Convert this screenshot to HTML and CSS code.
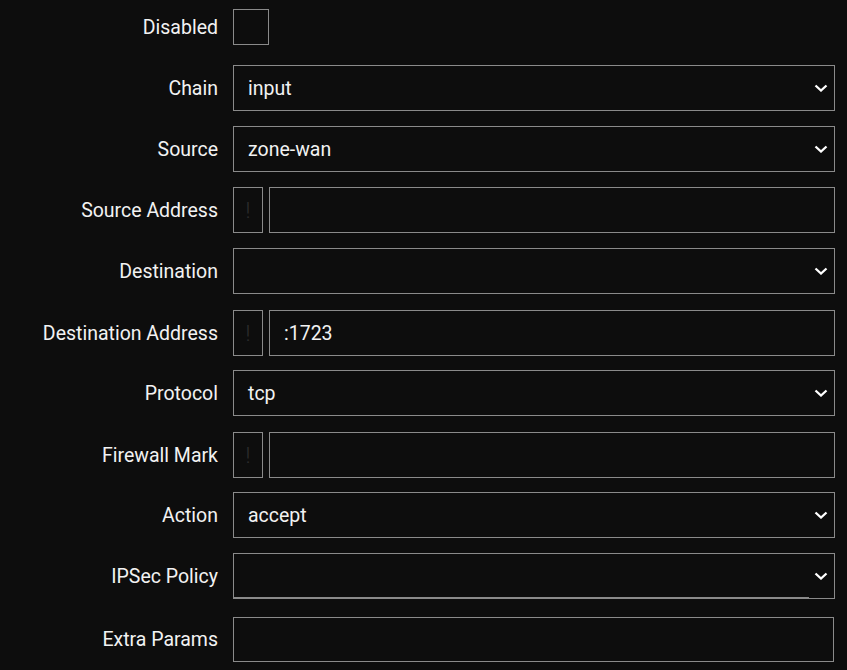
FILE: index.html
```html
<!DOCTYPE html>
<html>
<head>
<meta charset="utf-8">
<link rel="stylesheet" href="styles.css">
</head>
<body>
<form class="form">
  <div class="row row-check">
    <label class="label">Disabled</label>
    <div class="ctrl"><span class="checkbox"></span></div>
  </div>
  <div class="row">
    <label class="label">Chain</label>
    <div class="ctrl select"><span class="val">input</span><svg class="chev" viewBox="0 0 14 8"><polyline points="1.5,1.5 7,6.5 12.5,1.5"/></svg></div>
  </div>
  <div class="row">
    <label class="label">Source</label>
    <div class="ctrl select"><span class="val">zone-wan</span><svg class="chev" viewBox="0 0 14 8"><polyline points="1.5,1.5 7,6.5 12.5,1.5"/></svg></div>
  </div>
  <div class="row">
    <label class="label">Source Address</label>
    <div class="ctrl pair"><span class="bang">!</span><span class="input"></span></div>
  </div>
  <div class="row">
    <label class="label">Destination</label>
    <div class="ctrl select"><span class="val"></span><svg class="chev" viewBox="0 0 14 8"><polyline points="1.5,1.5 7,6.5 12.5,1.5"/></svg></div>
  </div>
  <div class="row row-adj">
    <label class="label">Destination Address</label>
    <div class="ctrl pair"><span class="bang">!</span><span class="input"><span class="val">:1723</span></span></div>
  </div>
  <div class="row">
    <label class="label">Protocol</label>
    <div class="ctrl select"><span class="val">tcp</span><svg class="chev" viewBox="0 0 14 8"><polyline points="1.5,1.5 7,6.5 12.5,1.5"/></svg></div>
  </div>
  <div class="row row-adj">
    <label class="label">Firewall Mark</label>
    <div class="ctrl pair"><span class="bang">!</span><span class="input"></span></div>
  </div>
  <div class="row">
    <label class="label">Action</label>
    <div class="ctrl select"><span class="val">accept</span><svg class="chev" viewBox="0 0 14 8"><polyline points="1.5,1.5 7,6.5 12.5,1.5"/></svg></div>
  </div>
  <div class="row row-ipsec">
    <label class="label">IPSec Policy</label>
    <div class="ctrl select ipsec"><span class="val"></span><svg class="chev" viewBox="0 0 14 8"><polyline points="1.5,1.5 7,6.5 12.5,1.5"/></svg><span class="underline"></span></div>
  </div>
  <div class="row">
    <label class="label">Extra Params</label>
    <div class="ctrl text"></div>
  </div>
</form>
</body>
</html>
```

FILE: styles.css
```css
html, body {
  margin: 0;
  padding: 0;
  background: #0d0d0d;
  width: 847px;
  height: 670px;
  overflow: hidden;
}
body {
  font-family: Roboto, "Liberation Sans", sans-serif;
  font-size: 19.5px;
  color: #f2f2f2;
}
.form {
  display: flex;
  flex-direction: column;
  gap: 15px;
  padding-top: 4px;
}
.row {
  display: grid;
  grid-template-columns: 218px 602px;
  column-gap: 15px;
  align-items: center;
  height: 46px;
}
.row-adj { margin-top: 1px; margin-bottom: -1px; }
.row-ipsec { height: 48px; }
.row-ipsec .label { padding-bottom: 2px; }
.row-ipsec .ctrl { align-self: start; }
.label {
  text-align: right;
  white-space: nowrap;
}
.ctrl {
  box-sizing: border-box;
  height: 46px;
}
.checkbox {
  display: block;
  box-sizing: border-box;
  width: 36px;
  height: 36px;
  margin-top: 5px;
  border: 1px solid #8a8a8a;
}
.select {
  position: relative;
  border: 1px solid #8a8a8a;
  display: flex;
  align-items: center;
  padding-left: 14px;
}
.chev {
  position: absolute;
  right: 6px;
  top: 50%;
  width: 14px;
  height: 8px;
  margin-top: -4px;
  fill: none;
  stroke: #ffffff;
  stroke-width: 2.3;
}
.ipsec .underline {
  position: absolute;
  left: -1px;
  bottom: -1px;
  width: 576px;
  height: 2px;
  background: #8a8a8a;
}
.pair {
  display: flex;
  gap: 6px;
}
.bang {
  box-sizing: border-box;
  width: 30px;
  height: 46px;
  border: 1px solid #8a8a8a;
  color: #2e2e2e;
  display: flex;
  align-items: center;
  justify-content: center;
  font-size: 22px;
  font-weight: 300;
}
.input {
  flex: 1;
  box-sizing: border-box;
  height: 46px;
  border: 1px solid #8a8a8a;
  display: flex;
  align-items: center;
  padding-left: 14px;
}
.text {
  width: 601px;
  height: 45px;
  border: 1px solid #8a8a8a;
}
```
